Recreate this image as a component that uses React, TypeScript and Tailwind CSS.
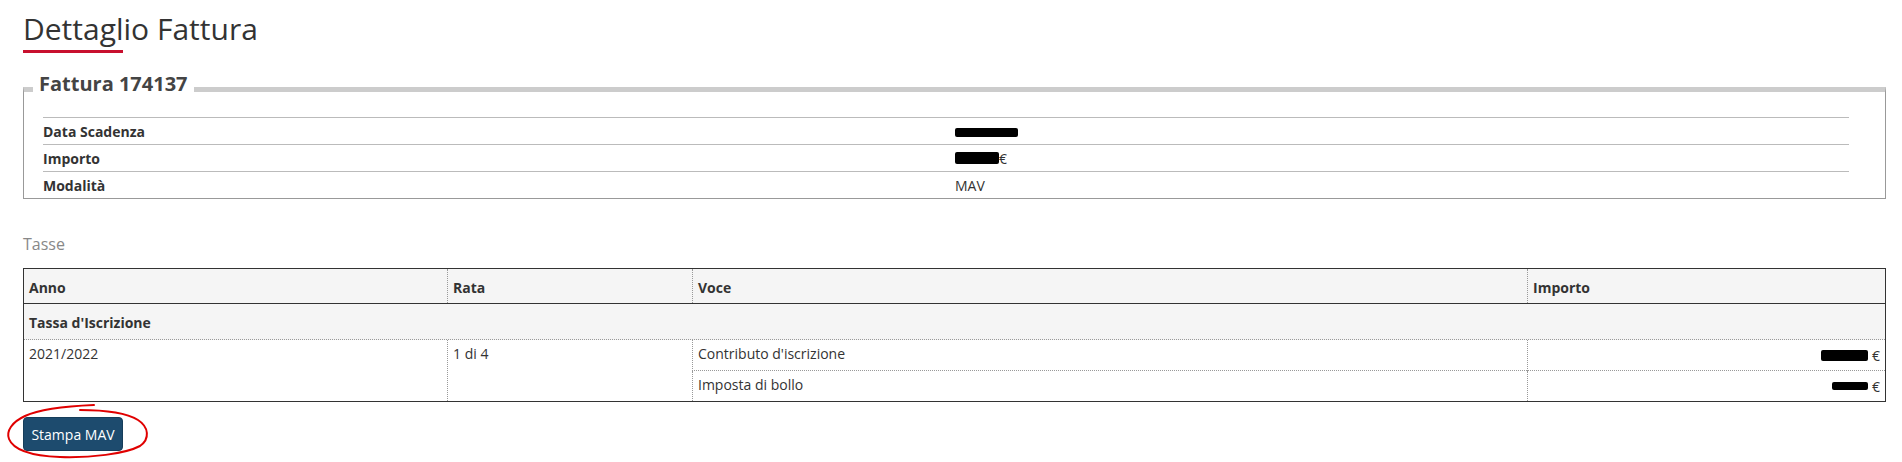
import React from 'react';

const Redacted: React.FC<{ w: number; h: number }> = ({ w, h }) => (
  <span
    className="inline-block bg-black rounded-[2px] align-middle"
    style={{ width: w, height: h }}
  />
);

export default function App() {
  const infoRows = [
    { label: 'Data Scadenza', value: <Redacted w={63} h={9} /> },
    {
      label: 'Importo',
      value: (
        <span className="flex items-center">
          <Redacted w={44} h={12} />
          <span>€</span>
        </span>
      ),
    },
    { label: 'Modalità', value: <span>MAV</span> },
  ];

  return (
    <div className="min-h-screen bg-white pl-[23px] pr-[16px] pt-[12px] font-['Open_Sans',sans-serif] text-[#333]">
      {/* Titolo */}
      <h1 className="text-[30px] leading-[33px] font-normal text-[#333]">Dettaglio Fattura</h1>
      <div className="mt-[5px] h-[3px] w-[100px] bg-[#c8102e]" />

      {/* Dati fattura */}
      <fieldset className="mt-[21px] border-x border-b border-[#999] border-t-[5px] border-t-[#ccc] pl-[19px] pr-[36px] pt-[13px]">
        <legend className="relative -top-[5px] -ml-[10px] px-[6px] text-[20px] leading-[30px] font-bold text-[#444]">
          Fattura 174137
        </legend>
        <div className="flex flex-col">
          {infoRows.map((r) => (
            <div key={r.label} className="flex h-[27px] items-center border-t border-[#bbb] text-[14px]">
              <div className="w-[912px] font-bold text-[#333]">{r.label}</div>
              <div className="flex-1 text-[#333]">{r.value}</div>
            </div>
          ))}
        </div>
      </fieldset>

      {/* Tasse */}
      <div className="mt-[33px] text-[16px] leading-[24px] text-[#888]">Tasse</div>
      <div className="mt-[12px] grid grid-cols-[423px_245px_835px_1fr] border border-[#333] text-[14px] text-[#333]">
        {/* intestazione */}
        <div className="flex h-[35px] items-center border-b border-[#333] bg-[#f5f5f5] px-[5px] pt-[2px] font-bold">Anno</div>
        <div className="flex h-[35px] items-center border-b border-[#333] bg-[#f5f5f5] px-[5px] pt-[2px] font-bold relative">
          <span className="absolute left-0 top-0 bottom-0 border-l border-dotted border-[#999]" />
          <span className="pl-[1px]">Rata</span>
        </div>
        <div className="flex h-[35px] items-center border-b border-[#333] bg-[#f5f5f5] px-[5px] pt-[2px] font-bold relative">
          <span className="absolute left-0 top-0 bottom-0 border-l border-dotted border-[#999]" />
          <span className="pl-[1px]">Voce</span>
        </div>
        <div className="flex h-[35px] items-center border-b border-[#333] bg-[#f5f5f5] px-[5px] pt-[2px] font-bold relative">
          <span className="absolute left-0 top-0 bottom-0 border-l border-dotted border-[#999]" />
          <span className="pl-[1px]">Importo</span>
        </div>

        {/* gruppo */}
        <div className="col-span-4 flex h-[36px] items-center border-b border-dotted border-[#999] bg-[#f5f5f5] px-[5px] pt-[2px] font-bold">
          Tassa d'Iscrizione
        </div>

        {/* righe */}
        <div className="row-span-2 px-[5px] pt-[3px] leading-[21px]">2021/2022</div>
        <div className="row-span-2 border-l border-dotted border-[#999] px-[5px] pt-[3px] leading-[21px]">1 di 4</div>
        <div className="h-[31px] border-l border-b border-dotted border-[#999] px-[5px] pt-[3px] leading-[21px]">
          Contributo d'iscrizione
        </div>
        <div className="flex h-[31px] items-center justify-end gap-[4px] border-l border-b border-dotted border-[#999] px-[5px] leading-[21px]">
          <Redacted w={47} h={11} />
          <span>€</span>
        </div>
        <div className="h-[30px] border-l border-dotted border-[#999] px-[5px] pt-[3px] leading-[21px]">Imposta di bollo</div>
        <div className="flex h-[30px] items-center justify-end gap-[4px] border-l border-dotted border-[#999] px-[5px] leading-[21px]">
          <Redacted w={36} h={8} />
          <span>€</span>
        </div>
      </div>

      {/* Pulsante */}
      <div className="relative mt-[15px] inline-block">
        <button className="h-[34px] w-[100px] rounded-[4px] border border-[#163d5a] bg-[#1d4b6e] text-[14px] text-white">
          Stampa MAV
        </button>
        <svg
          className="pointer-events-none absolute left-[-23px] top-[-16px]"
          width="180"
          height="62"
          viewBox="0 0 180 62"
          fill="none"
        >
          <path
            d="M94 4 C70 5, 40 8, 25 15 C12 21, 6 30, 9 38 C13 48, 30 55, 60 56 C90 57, 125 53, 140 45 C150 38, 149 26, 138 19 C125 11, 100 9, 80 9"
            stroke="#e00000"
            strokeWidth="2"
            strokeLinecap="round"
          />
        </svg>
      </div>
    </div>
  );
}
